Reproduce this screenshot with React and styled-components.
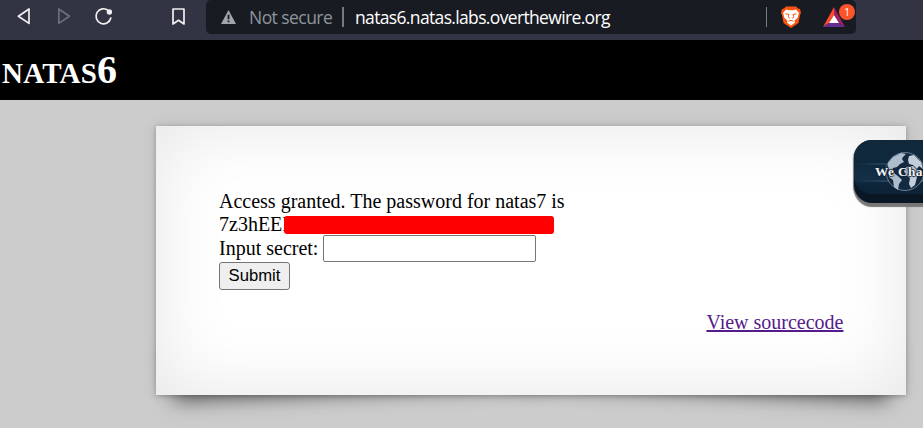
import React from "react";
import styled, { createGlobalStyle } from "styled-components";

const GlobalStyle = createGlobalStyle`
  * { box-sizing: border-box; }
  body { margin: 0; background: #cccccc; overflow: hidden; }
`;

const Page = styled.div`
  position: relative;
  width: 923px;
  height: 428px;
  overflow: hidden;
  background: #cccccc;
  color: #000;
  font-family: "Liberation Serif", "Times New Roman", serif;
  font-size: 20px;
`;

const BrowserBar = styled.header`
  display: flex;
  height: 40px;
  background: #323443;
`;

const NavButtons = styled.nav`
  display: flex;
  width: 206px;
  height: 34px;
`;

const Glyph = styled.svg`
  display: block;
  flex: none;
`;

const AddressBar = styled.div`
  display: flex;
  align-items: center;
  width: 650px;
  height: 34px;
  padding-left: 14px;
  background: #181b22;
  border-radius: 5px;
  font-family: "Open Sans", "Noto Sans", sans-serif;
  font-size: 17.5px;
  line-height: 34px;
  white-space: nowrap;
`;

const Security = styled.span`
  width: 84px;
  margin-left: 12px;
  color: #8f959d;
  letter-spacing: ${(p) => p.$tracking};
`;

const Divider = styled.i`
  flex: none;
  width: ${(p) => p.$width};
  height: 20px;
  margin-left: ${(p) => p.$gap};
  background: #777a80;
`;

const Url = styled.span`
  width: 411px;
  margin-left: 11px;
  color: #fff;
  letter-spacing: -0.65px;
`;

const TitleBar = styled.h1`
  height: 60px;
  margin: 0;
  padding-left: 2px;
  background: #000;
  color: #fff;
  font-size: 40px;
  font-weight: bold;
  font-variant: small-caps;
  line-height: 59px;
`;

const TitleWord = styled.span`
  font-size: 42px;
  line-height: 1;
  letter-spacing: 0.2px;
`;

const Card = styled.main`
  position: relative;
  z-index: 0;
  width: 750px;
  height: 269px;
  margin: 26px 0 0 156px;
  padding: 63px 62.5px 0 63px;

  &::before,
  &::after {
    content: "";
    position: absolute;
    z-index: -2;
    bottom: 19px;
    width: 375px;
    height: 54px;
    box-shadow: 0 16px 20px rgba(0, 0, 0, 0.5);
  }
  &::before { left: 16px; transform: rotate(-3deg); }
  &::after { right: 16px; transform: rotate(3deg); }
`;

const Paper = styled.div`
  position: absolute;
  z-index: -1;
  inset: 0;
  background: #fff;
  box-shadow: 0 1px 5px rgba(0, 0, 0, 0.25), 0 0 15px rgba(0, 0, 0, 0.1),
    inset 0 0 75px rgba(0, 0, 0, 0.1);
`;

const Line = styled.div`
  position: relative;
  display: flex;
  align-items: center;
  height: ${(p) => p.$height};
  padding-top: ${(p) => p.$drop || "0"};
  white-space: nowrap;
`;

const Redaction = styled.span`
  position: absolute;
  top: 4px;
  left: 65px;
  width: 270px;
  height: 18px;
  border-radius: 3px;
  background: #ff0000;
`;

const Secret = styled.input`
  width: 213px;
  height: 27px;
  margin: 0 0 0 auto;
  padding: 1px 3px;
  border: 1px solid #767676;
  border-radius: 2px;
  background: #fff;
`;

const Field = styled.label`
  display: flex;
  align-items: center;
  width: 317px;
`;

const Submit = styled.button`
  width: 71px;
  height: 28px;
  padding: 0;
  border: 1px solid #767676;
  border-radius: 3px;
  background: #efefef;
  color: #000;
  font: 16.67px/24px "Liberation Sans", Arial, sans-serif;
`;

const SourceLink = styled.a`
  display: block;
  width: max-content;
  margin: 21px 0 0 auto;
  color: #551a8b;
  line-height: 23px;
  text-decoration: underline;
  text-decoration-thickness: 2px;
  text-underline-offset: 1px;
`;

const Badge = styled.aside`
  position: absolute;
  z-index: 3;
  top: 140px;
  left: 854px;
  width: 90px;
  height: 63px;
  border-radius: 18px;
  background: #091725;
  box-shadow: 0 4px 1px #777, -1px 1px 1px #777;
`;

const BadgeFace = styled.div`
  width: 90px;
  height: 54px;
  border-radius: 18px;
  background:
    linear-gradient(90deg, transparent, rgba(74, 112, 145, 0.6) 60%) 0 23px / 90px 2px no-repeat,
    linear-gradient(90deg, transparent, rgba(74, 112, 145, 0.6) 60%) 0 40px / 90px 2px no-repeat,
    linear-gradient(#11283b 0, #0f283c 45%, #142f47 70%, #0d2438 85%);
`;

const BadgeText = styled.span`
  position: absolute;
  top: 24px;
  left: 21px;
  color: #f2f5f9;
  font: bold 13.3px/16px "Liberation Serif", serif;
  letter-spacing: 0.4px;
  text-shadow: 0 1px 1px #172638, 1px 0 1px #172638, -1px 0 1px #172638, 0 -1px 1px #172638;
  white-space: nowrap;
`;

const Globe = styled.svg`
  position: absolute;
  top: 12px;
  left: 31px;
`;

const NavIcons = () => (
  <Glyph width="206" height="34" fill="none" stroke="#f0f0f1" strokeWidth="1.7" strokeLinejoin="round" strokeLinecap="round">
    <path d="M29 9v14.4L18.4 16.3Z" />
    <path d="M58.8 9v14.4L69.4 16.3Z" stroke="#6c6e79" />
    <path d="M108.4 10.6A7.5 7.5 0 1 0 110.8 18" />
    <circle cx="109.4" cy="12" r="2.7" fill="#f0f0f1" stroke="none" />
    <path d="M173 9h11v15l-5.5-3.7L173 24Z" />
  </Glyph>
);

const Warning = () => (
  <Glyph width="17" height="16" viewBox="0 0 17 16">
    <path d="M8.5 1 16 15H1Z" fill="#a2a5ac" />
    <path d="M8.5 5.8v4.5M8.5 11.6v1.7" stroke="#181b22" strokeWidth="1.8" />
  </Glyph>
);

const BraveLion = () => (
  <Glyph width="22" height="24" viewBox="0 0 22 24">
    <path d="M6 1.5h10l2 2 2 .5 1 4-1 2-1.5 8L11 23l-7.5-5L2 10 1 8l1-4 2-.5Z" fill="#fb5412" />
    <path d="m6 4.5 3 .7h4l3-.7L19 8l-1.5 5-3 2.5.5 2-4 3-4-3 .5-2-3-2.5L3 8Z" fill="#fff" />
    <path d="m5.5 8.7 3.5.9-.7 2L9.5 13.5M16.5 8.7l-3.5.9.7 2-1.2 1.9M8.5 16.3l2.5-1 2.5 1" fill="none" stroke="#fb5412" strokeWidth="1" />
  </Glyph>
);

const Rewards = styled.div`
  position: relative;
  width: 33px;
  height: 34px;
  margin-left: 20px;
`;

const Count = styled.b`
  position: absolute;
  top: 4px;
  left: 17px;
  width: 16px;
  height: 16px;
  border-radius: 50%;
  background: #fb542b;
  color: #fff;
  font: 10px/16px "Open Sans", sans-serif;
  text-align: center;
`;

const Triangle = () => (
  <Glyph width="24" height="34">
    <path d="M12 7 1 27l6-4 5-8Z" fill="#ff4a2b" />
    <path d="m12 7 11 20-6-4-5-8Z" fill="#9e1f63" />
    <path d="m1 27 6-4h10l6 4Z" fill="#662d91" />
    <path d="m12 15 5 8H7Z" fill="#fff" />
  </Glyph>
);

export default function App() {
  return (
    <Page>
      <GlobalStyle />
      <BrowserBar>
        <NavButtons><NavIcons /></NavButtons>
        <AddressBar>
          <Warning />
          <Security $tracking="-0.55px">Not secure</Security>
          <Divider $gap="9px" $width="2px" />
          <Url>natas6.natas.labs.overthewire.org</Url>
          <Divider $gap="0px" $width="1px" />
          <Glyph width="13" height="1" />
          <BraveLion />
          <Rewards><Triangle /><Count>1</Count></Rewards>
        </AddressBar>
      </BrowserBar>
      <TitleBar><TitleWord>natas</TitleWord>6</TitleBar>
      <Card>
        <Paper />
        <Line $height="23px" $drop="2px">Access granted. The password for natas7 is</Line>
        <Line $height="23px" $drop="2px">7z3hEEI<Redaction /></Line>
        <Line $height="27px">
          <Field>Input secret:<Secret type="text" /></Field>
        </Line>
        <Submit type="submit">Submit</Submit>
        <SourceLink>View sourcecode</SourceLink>
      </Card>
      <Badge>
        <BadgeFace />
        <Globe width="40" height="40" viewBox="0 0 40 40">
          <circle cx="20" cy="19.5" r="19" fill="#142a40" stroke="#8296aa" strokeWidth="0.8" />
          <path d="m3 11 5-6 8-4 5 1-3 3-1 2 2 3-4 2-3 3-4 1-1 3-3-1-1-4Z" fill="#aebdcb" />
          <path d="m4 22 5-1 5 4 3 3-3 4-1 6-4-3-1-7-4-3Z" fill="#aebdcb" />
          <path d="m24 4 5-1 7 7 2 7-4-3-2 3-4-4-4-1-1-4Zm-3 11 7-1 3 3 4 4-3 4-2 8-4 3-2-4 1-6-4-3-2-4Z" fill="#c2ceda" />
        </Globe>
        <BadgeText>We Cha</BadgeText>
      </Badge>
    </Page>
  );
}
